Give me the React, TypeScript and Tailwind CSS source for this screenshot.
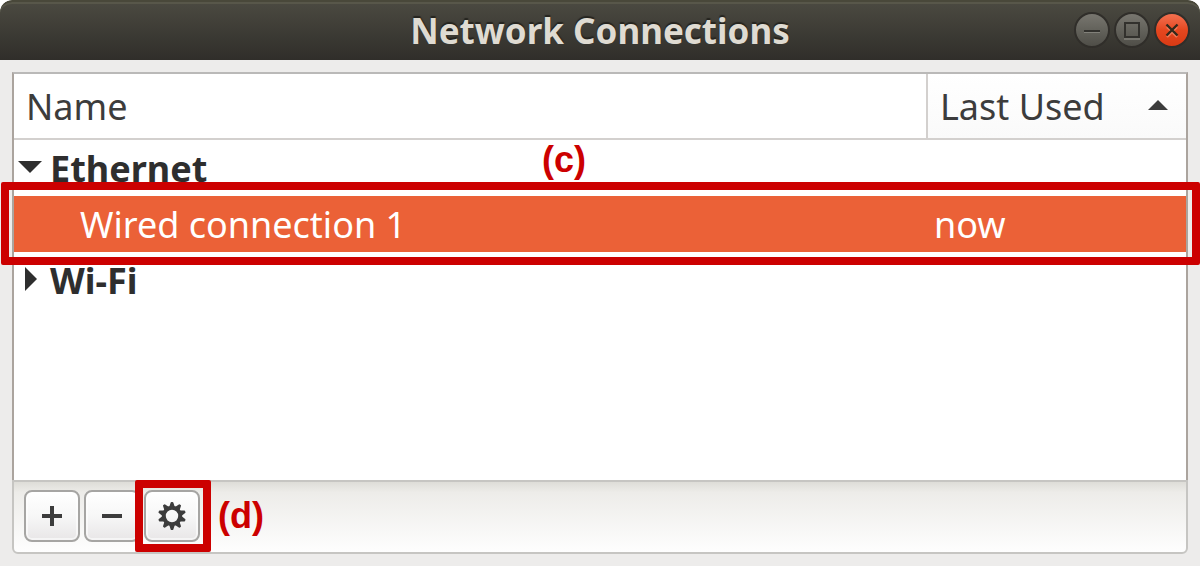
import { useState } from "react";
import type { ReactNode } from "react";

const GEAR_TEETH = [0, 36, 72, 108, 144, 180, 216, 252, 288, 324];

function WindowButton({ label, close, children }: { label: string; close?: boolean; children: ReactNode }) {
  return (
    <button
      type="button"
      aria-label={label}
      className={
        close
          ? "size-9 rounded-full border-2 border-[#302e2a] bg-linear-to-b from-[#f3704f] via-[#e5471f] to-[#d93a14]"
          : "size-9 rounded-full border-2 border-[#302e2a] bg-linear-to-b from-[#78766f] via-[#63625b] to-[#4f4e48]"
      }
    >
      <svg viewBox="0 0 32 32" className="size-8" fill="none" aria-hidden="true">
        {children}
      </svg>
    </button>
  );
}

function ToolButton({ label, children }: { label: string; children: ReactNode }) {
  return (
    <button
      type="button"
      aria-label={label}
      className="flex h-[52px] w-14 items-center justify-center rounded-lg border-2 border-[#a6a5a3] bg-linear-to-b from-white via-[#f7f7f7] to-[#e8e6e7] text-[#3c3c3c] shadow-[inset_0_0_0_2px_#ffffff90]"
    >
      <svg viewBox="0 0 32 32" className="size-8" aria-hidden="true">
        {children}
      </svg>
    </button>
  );
}

function GroupRow({ name, open, onToggle }: { name: string; open: boolean; onToggle: () => void }) {
  return (
    <tr className="h-14">
      <td className="p-0" colSpan={2}>
        <button
          type="button"
          aria-expanded={open}
          onClick={onToggle}
          className="flex items-center pl-1 font-bold text-[#2e2e2e]"
        >
          <svg viewBox="0 0 32 32" className="size-8" fill="#2e2e2e" aria-hidden="true">
            {open ? <path d="M0 9h24L12 21z" /> : <path d="M7 3v24l12-12z" />}
          </svg>
          <span className="pt-0.5">{name}</span>
        </button>
      </td>
    </tr>
  );
}

export default function App() {
  const [ethernetOpen, setEthernetOpen] = useState(true);
  const [wifiOpen, setWifiOpen] = useState(false);

  return (
    <div className="flex min-h-screen flex-col overflow-hidden rounded-t-xl bg-[#edeceb] font-['Noto_Sans',sans-serif] text-4xl leading-[48px] text-[#3c3c3c]">
      <header className="grid h-15 grid-cols-[1fr_auto_1fr] items-center rounded-t-xl border-t-2 border-[#49483a] bg-linear-to-b from-[#4b4a41] to-[#302e2a] px-2.5 pb-0.5 shadow-[inset_0_2px_0_#58574a]">
        <h1 className="col-start-2 pt-0.5 text-[35px] font-bold text-[#dfdbd2] [text-shadow:0_-2px_1px_#25241f]">
          Network Connections
        </h1>
        <div className="flex justify-end gap-1">
          <WindowButton label="Minimize">
            <path d="M8 18h16" stroke="#82817a" strokeWidth="2" />
            <path d="M8 17h16" stroke="#32312d" strokeWidth="2" />
          </WindowButton>
          <WindowButton label="Maximize">
            <path d="M8 25h16" stroke="#77766f" strokeWidth="2" />
            <rect x="9" y="9" width="14" height="14" stroke="#32312d" strokeWidth="2" />
          </WindowButton>
          <WindowButton label="Close" close>
            <path d="M11 13l10 10M21 13l-10 10" stroke="#f27a59" strokeWidth="2.4" />
            <path d="M10.500 10.500l11 11M21.500 10.500l-11 11" stroke="#32291b" strokeWidth="2.400" />
          </WindowButton>
        </div>
      </header>

      <main className="m-3 flex flex-1 flex-col">
        <div className="flex-1 border-x-2 border-t-2 border-x-[#aba49e] border-t-[#bab9b8] bg-white">
          <table className="w-full table-fixed border-separate border-spacing-0 text-left">
            <colgroup>
              <col />
              <col className="w-[260px]" />
            </colgroup>
            <thead>
              <tr className="h-[66px]">
                <th scope="col" className="border-b-2 border-[#d3d0ce] p-0 pt-0.5 pl-3 font-normal">
                  Name
                </th>
                <th
                  scope="col"
                  aria-sort="ascending"
                  className="border-b-2 border-l-2 border-[#d3d0ce] bg-linear-to-b from-white to-[#fafafa] p-0 font-normal"
                >
                  <button type="button" className="flex w-full items-center justify-between pr-4 pl-3">
                    <span className="pt-0.5">Last Used</span>
                    <svg viewBox="0 0 24 24" className="size-6" fill="#3c3c3c" aria-hidden="true">
                      <path d="M2 16h20L12 6z" />
                    </svg>
                  </button>
                </th>
              </tr>
            </thead>
            <tbody>
              <GroupRow name="Ethernet" open={ethernetOpen} onToggle={() => setEthernetOpen(!ethernetOpen)} />
              {ethernetOpen && (
                <tr className="relative h-14 bg-[#eb6137] text-white">
                  <td className="p-0 pt-0.5 pl-[66px]">
                    Wired connection 1
                    <span
                      aria-hidden="true"
                      className="pointer-events-none absolute -top-3.5 -right-3.5 -bottom-[13px] -left-[13px] rounded-xs border-8 border-[#c00]"
                    />
                    <span className="absolute bottom-full left-[528px] mb-3 font-['Liberation_Sans',sans-serif] font-bold text-[#c00]">
                      (c)
                    </span>
                  </td>
                  <td className="p-0 pt-0.5 pl-2">now</td>
                </tr>
              )}
              <GroupRow name="Wi-Fi" open={wifiOpen} onToggle={() => setWifiOpen(!wifiOpen)} />
            </tbody>
          </table>
        </div>

        <div
          role="toolbar"
          aria-label="Connection actions"
          className="flex gap-1 rounded-b-md border-2 border-[#c6c5c2] bg-linear-to-b from-[#deddd8] via-[#edece9] via-15% to-[#fefefe] px-2.5 pt-2 pb-2.5"
        >
          <ToolButton label="Add connection">
            <path d="M14 6h4v8h8v4h-8v8h-4v-8H6v-4h8z" fill="currentColor" />
          </ToolButton>
          <ToolButton label="Remove connection">
            <path d="M6 14h20v4H6z" fill="currentColor" />
          </ToolButton>
          <div className="relative">
            <ToolButton label="Edit connection">
              <circle cx="16" cy="16" r="8.200" fill="none" stroke="currentColor" strokeWidth="4" />
              {GEAR_TEETH.map((angle) => (
                <path
                  key={angle}
                  d="M13.200 7L14.700 2.600Q14.900 2 15.500 2H16.500Q17.100 2 17.300 2.600L18.800 7z"
                  fill="currentColor"
                  transform={`rotate(${angle} 16 16)`}
                />
              ))}
            </ToolButton>
            <span
              aria-hidden="true"
              className="pointer-events-none absolute -inset-y-2.5 -right-[11px] -left-[9px] rounded-xs border-8 border-[#c00]"
            />
            <span className="absolute top-0.5 left-full ml-[18px] font-['Liberation_Sans',sans-serif] font-bold text-[#c00]">
              (d)
            </span>
          </div>
        </div>
      </main>
    </div>
  );
}
